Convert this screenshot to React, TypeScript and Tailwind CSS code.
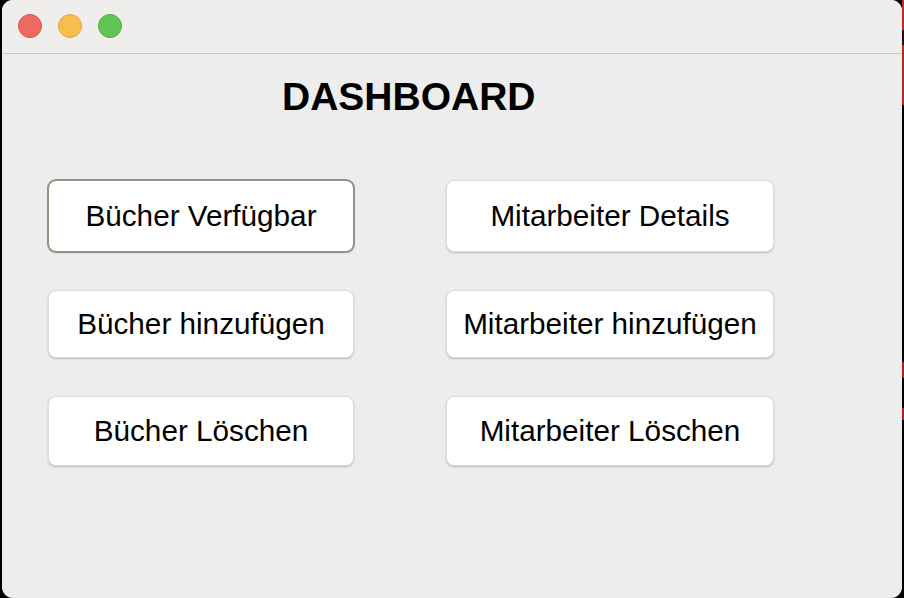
import React from 'react';

const font = { fontFamily: '"Liberation Sans", Arial, Helvetica, sans-serif' };

type Btn = { label: string; focused?: boolean; h: string };

const left: Btn[] = [
  { label: 'Bücher Verfügbar', focused: true, h: 'h-[72px]' },
  { label: 'Bücher hinzufügen', h: 'h-[68px]' },
  { label: 'Bücher Löschen', h: 'h-[70px]' },
];

const right: Btn[] = [
  { label: 'Mitarbeiter Details', h: 'h-[72px]' },
  { label: 'Mitarbeiter hinzufügen', h: 'h-[68px]' },
  { label: 'Mitarbeiter Löschen', h: 'h-[70px]' },
];

const DashButton: React.FC<{ btn: Btn; width: string }> = ({ btn, width }) => (
  <button
    className={`${width} ${btn.h} bg-white rounded-[8px] border border-[#dcdcdc] shadow-[0_1px_2px_rgba(0,0,0,0.22)] text-[29.7px] text-black flex items-center justify-center ${
      btn.focused ? 'outline-2 outline-solid outline-[#8a9884] -outline-offset-1' : ''
    }`}
  >
    {btn.label}
  </button>
);

export default function App() {
  return (
    <div className="w-[904px] h-[598px] bg-black flex overflow-hidden" style={font}>
      <div className="w-[2px]" />
      {/* Window */}
      <div className="w-[900px] h-[598px] rounded-[11px] overflow-hidden flex flex-col bg-[#ededed]">
        {/* Title bar */}
        <div className="h-[54px] bg-[#efeeec] border-b border-[#c9c9c9] flex items-center gap-[16px] pl-[16px] pb-[2px]">
          <span className="w-[24px] h-[24px] rounded-full bg-[#ee6a5f] border border-[#d9584e]" />
          <span className="w-[24px] h-[24px] rounded-full bg-[#f6be4f] border border-[#dea73e]" />
          <span className="w-[24px] h-[24px] rounded-full bg-[#61c554] border border-[#4fae43]" />
        </div>

        {/* Content */}
        <div className="flex flex-col">
          <h1 className="pl-[280px] pt-[23px] text-[39px] leading-none font-bold text-black">DASHBOARD</h1>

          <div className="flex pt-[64px] pl-[46px] gap-[92px]">
            <div className="flex flex-col gap-[38px]">
              {left.map((b) => (
                <DashButton key={b.label} btn={b} width="w-[306px]" />
              ))}
            </div>
            <div className="flex flex-col gap-[38px]">
              {right.map((b) => (
                <DashButton key={b.label} btn={b} width="w-[328px]" />
              ))}
            </div>
          </div>
        </div>
      </div>
      {/* Desktop edge */}
      <div className="w-[2px] flex flex-col">
        <div className="h-[30px] bg-[#c0262c]" />
        <div className="h-[15px] bg-[#2a0a0c]" />
        <div className="h-[60px] bg-[#b8252b]" />
        <div className="h-[257px] bg-black" />
        <div className="h-[16px] bg-[#a8202a]" />
        <div className="h-[30px] bg-black" />
        <div className="h-[12px] bg-[#a8202a]" />
      </div>
    </div>
  );
}
